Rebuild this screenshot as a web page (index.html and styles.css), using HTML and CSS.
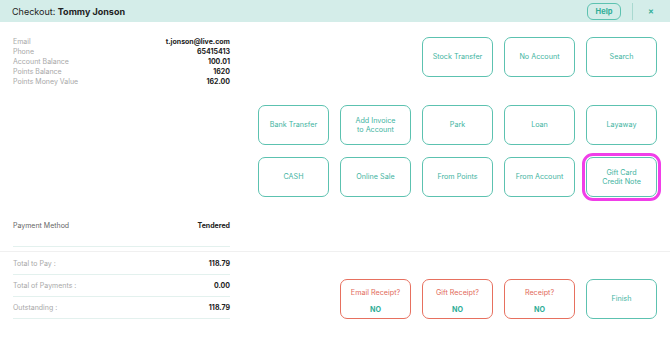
FILE: index.html
```html
<!DOCTYPE html>
<html lang="en">
<head>
  <meta charset="UTF-8" />
  <title>Checkout</title>
  <link rel="stylesheet" href="styles.css">
</head>
<body>

<header class="topbar">
  <div class="title">Checkout: <strong>Tommy Jonson</strong></div>
  <div class="topbar-actions">
    <button class="help-btn">Help</button>
    <span class="divider"></span>
    <button class="close-btn">&#x2715;</button>
  </div>
</header>

<!-- customer + payment methods -->
<section class="upper">
  <div class="left-col">
    <div class="info">
      <div class="info-row"><span class="label">Email</span><span class="value">t.jonson@live.com</span></div>
      <div class="info-row"><span class="label">Phone</span><span class="value">65415413</span></div>
      <div class="info-row"><span class="label">Account Balance</span><span class="value">100.01</span></div>
      <div class="info-row"><span class="label">Points Balance</span><span class="value">1620</span></div>
      <div class="info-row"><span class="label">Points Money Value</span><span class="value">162.00</span></div>
    </div>
    <div class="method-row">
      <span class="method-label">Payment Method</span>
      <span class="value">Tendered</span>
    </div>
  </div>

  <div class="right-col">
    <div class="btn-grid quick">
      <button class="tile col3">Stock Transfer</button>
      <button class="tile">No Account</button>
      <button class="tile">Search</button>
    </div>
    <div class="btn-grid methods">
      <button class="tile">Bank Transfer</button>
      <button class="tile">Add Invoice<br>to Account</button>
      <button class="tile">Park</button>
      <button class="tile">Loan</button>
      <button class="tile">Layaway</button>
      <button class="tile">CASH</button>
      <button class="tile">Online Sale</button>
      <button class="tile">From Points</button>
      <button class="tile">From Account</button>
      <button class="tile selected">Gift Card<br>Credit Note</button>
    </div>
  </div>
</section>

<!-- totals + receipts -->
<section class="lower">
  <div class="left-col totals">
    <div class="total-row"><span class="label">Total to Pay :</span><span class="value">118.79</span></div>
    <div class="total-row"><span class="label">Total of Payments :</span><span class="value">0.00</span></div>
    <div class="total-row"><span class="label">Outstanding :</span><span class="value">118.79</span></div>
  </div>
  <div class="right-col">
    <div class="btn-grid receipts">
      <button class="tile receipt col2">Email Receipt?<span class="no">NO</span></button>
      <button class="tile receipt">Gift Receipt?<span class="no">NO</span></button>
      <button class="tile receipt">Receipt?<span class="no">NO</span></button>
      <button class="tile">Finish</button>
    </div>
  </div>
</section>

</body>
</html>
```

FILE: styles.css
```css
body {
  font-family: 'Inter', 'Open Sans', sans-serif;
  margin: 0;
  background: #fff;
  color: #222;
  width: 670px;
  height: 343px;
  overflow: hidden;
}

button {
  font-family: inherit;
  background: transparent;
  cursor: pointer;
}

.topbar {
  height: 22px;
  background: #d4ede9;
  display: flex;
  align-items: center;
  justify-content: space-between;
  padding: 0 12px 0 12px;
  box-sizing: border-box;
}

.title {
  font-size: 9px;
  color: #222;
}

.title strong {
  font-weight: 700;
}

.topbar-actions {
  display: flex;
  align-items: center;
  height: 100%;
}

.help-btn {
  width: 34px;
  height: 17px;
  padding: 0;
  border: 1px solid #5cc2b0;
  border-radius: 6px;
  color: #2fae97;
  font-size: 7.5px;
  font-weight: 700;
}

.divider {
  width: 1px;
  height: 17px;
  background: #a9d9d0;
  margin: 0 11px 0 11px;
}

.close-btn {
  border: none;
  padding: 0;
  width: 14px;
  color: #2fae97;
  font-size: 7px;
  font-weight: 700;
}

.upper {
  height: 230px;
  display: flex;
  border-bottom: 1px solid #f0f0f0;
  box-sizing: border-box;
}

.left-col {
  width: 217px;
  margin-left: 13px;
  flex-shrink: 0;
}

.upper .left-col {
  display: flex;
  flex-direction: column;
  justify-content: space-between;
  padding: 14px 0 4px 0;
  box-sizing: border-box;
}

.info-row,
.method-row,
.total-row {
  display: flex;
  justify-content: space-between;
  align-items: center;
  font-size: 7px;
}

.info-row {
  height: 10px;
}

.label {
  color: #a8a8a8;
}

.value {
  font-weight: 700;
  color: #222;
}

.method-row {
  height: 22px;
  padding-bottom: 10px;
  border-bottom: 1px solid #e3f1ee;
}

.method-label {
  color: #666;
}

.right-col {
  margin-left: 28px;
}

.btn-grid {
  display: grid;
  grid-template-columns: repeat(5, 71px);
  grid-auto-rows: 40px;
  column-gap: 11px;
  row-gap: 12px;
}

.quick {
  margin-top: 15px;
  margin-bottom: 28px;
}

.col3 {
  grid-column-start: 3;
}

.col2 {
  grid-column-start: 2;
}

.tile {
  border: 1.5px solid #5cc2b0;
  border-radius: 7px;
  color: #3fb49f;
  font-size: 7.2px;
  line-height: 9.5px;
  padding: 0 4px;
}

.tile.selected {
  outline: 3px solid #f03ee8;
  outline-offset: 1px;
  border-radius: 7px;
}

.lower {
  display: flex;
}

.totals {
  padding-top: 1px;
}

.total-row {
  height: 21px;
  border-bottom: 1px solid #e3f1ee;
}

.receipts {
  margin-top: 27px;
}

.tile.receipt {
  border-color: #e7705f;
  color: #e26a59;
  display: flex;
  flex-direction: column;
  align-items: center;
  justify-content: space-between;
  padding: 8px 4px 4px 4px;
}

.no {
  color: #2fae97;
  font-weight: 700;
}
```
